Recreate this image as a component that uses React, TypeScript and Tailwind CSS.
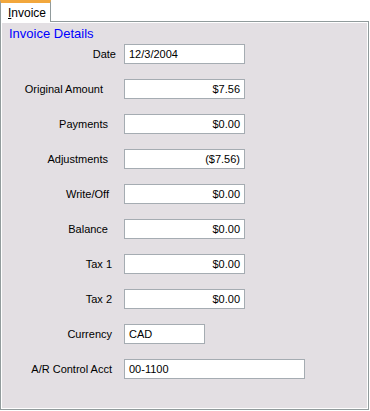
const rows: { label: string; value: string; pr: string; w: string; right: boolean }[] = [
  { label: "Date", value: "12/3/2004", pr: "pr-0", w: "w-[121px]", right: false },
  { label: "Original Amount", value: "$7.56", pr: "pr-[13px]", w: "w-[121px]", right: true },
  { label: "Payments", value: "$0.00", pr: "pr-[8px]", w: "w-[121px]", right: true },
  { label: "Adjustments", value: "($7.56)", pr: "pr-[8px]", w: "w-[121px]", right: true },
  { label: "Write/Off", value: "$0.00", pr: "pr-[7px]", w: "w-[121px]", right: true },
  { label: "Balance", value: "$0.00", pr: "pr-[8px]", w: "w-[121px]", right: true },
  { label: "Tax 1", value: "$0.00", pr: "pr-[4px]", w: "w-[121px]", right: true },
  { label: "Tax 2", value: "$0.00", pr: "pr-[4px]", w: "w-[121px]", right: true },
  { label: "Currency", value: "CAD", pr: "pr-[4px]", w: "w-[81px]", right: false },
  { label: "A/R Control Acct", value: "00-1100", pr: "pr-[4px]", w: "w-[181px]", right: false },
];

export default function App() {
  return (
    <div
      className="w-[370px] h-[411px] bg-white text-[11px] text-black"
      style={{ fontFamily: '"Liberation Sans", Arial, sans-serif' }}
    >
      <div className="flex">
        <div className="relative z-10 -mb-px w-[51px] h-[22px] bg-white border-x border-[#919b9c] border-t-[3px] border-t-[#f2a73c] flex items-center pl-[7px]">
          <span className="text-[12px] leading-none mt-[1px]">
            <span className="underline">I</span>nvoice
          </span>
        </div>
      </div>
      <div className="w-[369px] h-[389px] border border-[#919b9c] p-px bg-white">
        <div className="h-full bg-[#e3dfe3] pt-[3px]">
          <div className="pl-[7px] text-[13px] leading-[16px] text-[#0000ff]">Invoice Details</div>
          <div className="mt-[2px] flex flex-col gap-[15px]">
            {rows.map((r) => (
              <div key={r.label} className="flex items-center h-[20px]">
                <div className={`w-[114px] text-right ${r.pr}`}>{r.label}</div>
                <div
                  className={`ml-[8px] h-[20px] ${r.w} bg-white border border-[#a5acb2] flex items-center px-[4px] ${
                    r.right ? "justify-end" : "justify-start"
                  }`}
                >
                  {r.value}
                </div>
              </div>
            ))}
          </div>
        </div>
      </div>
    </div>
  );
}
